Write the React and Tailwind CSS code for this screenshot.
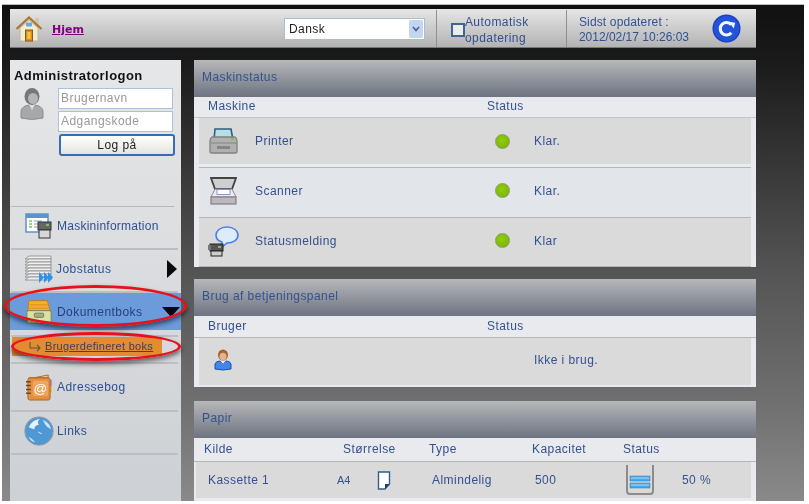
const TXT = 'text-[#33518f]'

function House() {
  return (
    <svg width="28" height="28" viewBox="0 0 28 28">
      <rect x="20" y="3" width="4" height="8" fill="#c9c9b8" />
      <path d="M5 13 L14 5 L23 13 V26 H5Z" fill="#efeed2" stroke="#b9b9a4" />
      <path d="M1.5 14 L14 2.5 L26.5 14" fill="none" stroke="#b0742a" strokeWidth="2.2" />
      <rect x="11" y="7.5" width="6" height="4" rx="1" fill="#6fa6dc" />
      <rect x="10.5" y="15" width="7" height="11" fill="#e08c16" stroke="#8a5a12" />
      <rect x="12.5" y="17" width="3" height="7" fill="#f3c552" />
    </svg>
  )
}

function Person() {
  return (
    <svg width="24" height="34" viewBox="0 0 24 34">
      <ellipse cx="12" cy="9.5" rx="7.5" ry="8.5" fill="#777" />
      <ellipse cx="13" cy="11.5" rx="5" ry="5.5" fill="#b5b5b5" />
      <path d="M1 31 V24 Q2 19 9 18 L12 22 L15 18 Q22 19 23 24 V31 Q12 34 1 31Z" fill="#a8a8a8" stroke="#8f8f8f" />
      <path d="M9 18 L12 23 L15 18Z" fill="#dcdcdc" />
    </svg>
  )
}

function MachineInfo() {
  return (
    <svg width="28" height="28" viewBox="0 0 28 28">
      <rect x="1" y="2" width="22" height="18" fill="#fff" stroke="#5c93c9" strokeWidth="1.5" />
      <rect x="1" y="2" width="22" height="4" fill="#5c93c9" />
      <path d="M4 9h3M4 12h3M4 15h3" stroke="#8abf6a" strokeWidth="1.5" />
      <path d="M9 9h8M9 12h6M9 15h6" stroke="#bbb" strokeWidth="1.5" />
      <rect x="13" y="10" width="13" height="8" fill="#666" stroke="#333" />
      <rect x="14" y="18" width="11" height="8" fill="#d8d8d8" stroke="#333" />
      <rect x="21" y="12" width="3" height="2" fill="#7fc04e" />
    </svg>
  )
}

function JobIcon() {
  return (
    <svg width="30" height="30" viewBox="0 0 30 30">
      {[2, 5, 8, 11, 14, 17, 20, 23].map((y) => (
        <path key={y} d={`M1 ${y + 3} L5 ${y} H27 V${y + 3} H1Z`} fill="#f0f0f0" stroke="#8f8f8f" strokeWidth="0.9" />
      ))}
      <path d="M15 18 L20 23.5 L15 29Z M20 18 L25 23.5 L20 29Z M24 18 L29 23.5 L24 29Z" fill="#2f93ea" />
    </svg>
  )
}

function DocBox() {
  return (
    <svg width="26" height="25" viewBox="0 0 28 30" preserveAspectRatio="none">
      <path d="M3 2 H23 L26 14 H2Z" fill="#f2b02f" stroke="#b67d17" />
      <path d="M4 7 H24 M3 11 H25" stroke="#d1901f" />
      <rect x="1" y="14" width="26" height="15" rx="2" fill="#d6e3a5" stroke="#77805a" />
      <rect x="9" y="17" width="10" height="5" rx="1" fill="#a3ad7f" stroke="#6e7653" />
    </svg>
  )
}

function AddressBook() {
  return (
    <svg width="29" height="27" viewBox="0 0 30 28">
      <rect x="24" y="6" width="4" height="7" fill="#b68fe0" />
      <rect x="24" y="13" width="4" height="6" fill="#e7c34d" />
      <path d="M4 5 L24 1 V4 H4Z" fill="#f1c79a" stroke="#a96b2b" />
      <rect x="3" y="4" width="23" height="23" rx="2" fill="#e58f3d" stroke="#a7642a" />
      <path d="M1 8h5M1 12h5M1 16h5M1 20h5" stroke="#6c4a26" strokeWidth="1.5" />
      <rect x="8" y="7" width="16" height="16" rx="2" fill="#eea560" />
      <text x="16" y="20" textAnchor="middle" fontSize="14" fill="#fff" fontFamily="Liberation Sans, sans-serif">@</text>
    </svg>
  )
}

function Globe() {
  return (
    <svg width="30" height="30" viewBox="0 0 32 32">
      <circle cx="16" cy="16" r="15" fill="#4f98d6" stroke="#8a9aa8" strokeWidth="1.2" />
      <path d="M5 12 Q9 4 17 3 Q13 7 16 9 Q11 10 11 14 Q7 13 5 12Z" fill="#e6f2fb" />
      <path d="M20 4 Q27 7 29 14 Q24 12 22 8Z" fill="#cfe5f6" />
      <path d="M5 22 Q9 24 12 28 Q7 27 5 22Z" fill="#cfe5f6" />
      <path d="M15 17 L19 19" stroke="#d8ecfa" />
    </svg>
  )
}

function Printer() {
  return (
    <svg width="29" height="26" viewBox="0 0 29 26">
      <path d="M6 1 H22 L24 12 H5Z" fill="#b5e0ea" stroke="#2f5f80" strokeWidth="1.6" />
      <path d="M3 9 H26 Q28 10 28 13 V24 Q28 25 26 25 H3 Q1 25 1 24 V13 Q1 10 3 9Z" fill="#b0b0b0" stroke="#808080" strokeWidth="1.3" />
      <path d="M2 15 H27" stroke="#858585" />
      <rect x="8" y="18" width="13" height="3" fill="#858585" />
      <rect x="22" y="10" width="3" height="2" fill="#79c25a" />
    </svg>
  )
}

function Scanner() {
  return (
    <svg width="27" height="28" viewBox="0 0 27 28">
      <path d="M1 1 H26 L22 12 H5Z" fill="#cfcfcf" stroke="#444" strokeWidth="1.8" />
      <path d="M5 12 H22 L26 20 H1Z" fill="#efe8f8" stroke="#8a8a8a" />
      <rect x="7" y="12.5" width="13" height="5" fill="#fff" stroke="#5a6fc0" strokeWidth="0.7" />
      <rect x="1" y="20" width="25" height="7" fill="#bdb7c2" stroke="#808080" strokeWidth="1.2" />
    </svg>
  )
}

function StatusBubble() {
  return (
    <svg width="32" height="32" viewBox="0 0 32 32">
      <path d="M20 2 C27 2 31 6 31 10 C31 15 26 18 20 18 L14 23 L15 17 C11 16 9 13 9 10 C9 6 13 2 20 2Z" fill="#dcecfa" stroke="#4f7dea" strokeWidth="1.6" />
      <rect x="3" y="19" width="13" height="7" fill="#555" stroke="#222" />
      <rect x="4" y="26" width="11" height="5" fill="#ccc" stroke="#222" />
      <rect x="11" y="21" width="3" height="2" fill="#7fc04e" />
      <rect x="1" y="20" width="3" height="5" fill="#777" />
    </svg>
  )
}

function UserIcon() {
  return (
    <svg width="18" height="22" viewBox="0 0 18 22">
      <ellipse cx="9" cy="6" rx="5" ry="5.6" fill="#a8632b" />
      <ellipse cx="9" cy="7.5" rx="3.5" ry="3.8" fill="#e2b48f" />
      <path d="M1 20 V15 Q2 12 6 12 L9 15 L12 12 Q16 12 17 15 V20 Q9 22 1 20Z" fill="#3f87ea" stroke="#1d4fa6" />
      <path d="M6.5 12 L9 15 L11.5 12Z" fill="#dfeaf7" />
    </svg>
  )
}

function PaperIcon() {
  return (
    <svg width="14" height="19" viewBox="0 0 14 19">
      <path d="M1.5 1 H12.5 V13 L8 18 H1.5Z" fill="#fff" stroke="#2f5f94" strokeWidth="1.4" />
      <path d="M8 18 V13 H12.5Z" fill="#1f3f6a" />
    </svg>
  )
}

function TrayIcon() {
  return (
    <svg width="30" height="30" viewBox="0 0 30 30">
      <path d="M2 0 V26 Q2 29 5 29 H25 Q28 29 28 26 V0" fill="none" stroke="#8b8b8b" strokeWidth="2" />
      <rect x="5" y="11" width="20" height="5" fill="#4aa8ec" stroke="#3a78ad" strokeWidth="0.5" />
      <rect x="5" y="18" width="20" height="5" fill="#4aa8ec" stroke="#3a78ad" strokeWidth="0.5" />
      <path d="M6 13h18M6 20h18" stroke="#a9dcf8" strokeWidth="1.2" />
    </svg>
  )
}

function Dot() {
  return <span className="block w-[15px] h-[15px] rounded-full bg-[radial-gradient(circle_at_45%_40%,#8fcf0a,#79ad0c)] border border-[#8a9f62]" />
}

function PanelHead({ title }) {
  return (
    <div className={`h-[37px] shrink-0 pl-2 pt-2 bg-gradient-to-b from-[#b7b8ba] to-[#6e7481] ${TXT} text-[12px]`}>
      {title}
    </div>
  )
}

function StatusRow({ icon, name, status, outer, inner }) {
  return (
    <div className={`mx-[5px] border-b border-[#b5b6b8] ${outer}`}>
      <div className={`flex items-center ${inner}`}>
        <div className="w-[48px] flex justify-center">{icon}</div>
        <div className="ml-[8px] w-[240px]">{name}</div>
        <div className="w-[39px] flex justify-start"><Dot /></div>
        <div>{status}</div>
      </div>
    </div>
  )
}

function NavRow({ icon, label, gap, h, arrow }) {
  return (
    <div className={`flex items-center ${h} ml-[1px] mr-[3px] border-b-2 border-[#bcbec1] pl-[13px] text-[#2f4f92] text-[12px]`}>
      <div className="w-[30px] flex justify-center shrink-0">{icon}</div>
      <span className={gap}>{label}</span>
      {arrow}
    </div>
  )
}

export default function App() {
  return (
    <div className="w-[809px] h-[504px] bg-white overflow-hidden font-['Liberation_Sans',sans-serif] tracking-[0.45px] blur-[0.35px]">
      <div className="relative w-[802px] h-[497px] ml-[2px] mt-[4px] border-t border-[#bbb] bg-[linear-gradient(to_bottom,#111_0,#1a1a1a_55px,#555_270px,#707070_400px,#8a8a8a_497px)] px-[8px] pt-[4px]">
        {/* top bar */}
        <div className="w-[746px] h-[39px] flex items-center bg-gradient-to-b from-[#e6e6e6] to-[#b3b3b3] border-b border-[#777] text-[12px] pt-[1px]">
          <div className="ml-[5px] w-[31px]"><House /></div>
          <a className="ml-[6px] mt-[3px] font-['DejaVu_Sans',sans-serif] tracking-normal font-bold text-[11px] text-[#800080] underline">Hjem</a>
          <div className="ml-[200px] w-[141px] h-[22px] bg-white border border-[#a9bdd4] flex items-center justify-between pl-1 pr-[1px] text-[#222]">
            Dansk
            <span className="w-[14px] h-[18px] bg-[#c4d5f2] rounded-[2px] flex items-center justify-center">
              <svg width="8" height="6" viewBox="0 0 8 6"><path d="M1 1 L4 4.5 L7 1" fill="none" stroke="#3f5f96" strokeWidth="1.6" /></svg>
            </span>
          </div>
          <div className="ml-[11px] h-full w-[131px] border-l border-r border-[#8f9093] flex items-center pl-[14px]">
            <span className="w-[14px] h-[14px] shrink-0 mt-[2px] border-2 border-[#3f6596] bg-[#ececec]" />
            <div className={`${TXT} leading-[16px] pt-[2px]`}>Automatisk<br />opdatering</div>
          </div>
          <div className={`pl-[12px] w-[145px] ${TXT} leading-[15px] pt-[2px] tracking-[0.15px]`}>
            Sidst opdateret :<br /><span className="tracking-normal">2012/02/17 10:26:03</span>
          </div>
          <svg width="29" height="29" viewBox="0 0 30 30">
            <circle cx="15" cy="15" r="14.5" fill="#1d3fc4" />
            <circle cx="15" cy="15" r="13" fill="#2353d8" />
            <path d="M20 11 A6.5 6.5 0 1 0 20 19.5" fill="none" stroke="#f2f6ff" strokeWidth="3.2" />
            <path d="M17.5 8 L24 9 L22.5 15Z" fill="#f2f6ff" />
          </svg>
        </div>

        <div className="flex mt-[12px] gap-[13px]">
          {/* sidebar */}
          <aside className="w-[171px] h-[441px] shrink-0 bg-gradient-to-b from-[#e6e7e8] to-[#cdd0d4] pt-[8px]">
            <h2 className="pl-[4px] font-bold text-[13px] text-[#111] leading-[16px]">Administratorlogon</h2>
            <div className="flex mt-[4px] h-[111px]">
              <div className="w-[48px] pl-[10px] -mt-[1px]"><Person /></div>
              <div className="flex flex-col text-[12px] text-[#999]">
                <div className="w-[115px] h-[21px] bg-white border border-[#adc1d8] pl-[2px] leading-[19px]">Brugernavn</div>
                <div className="w-[115px] h-[21px] mt-[2px] bg-white border border-[#adc1d8] pl-[2px] leading-[19px]">Adgangskode</div>
                <button className="w-[116px] h-[22px] mt-[2px] ml-[1px] bg-gradient-to-b from-white to-[#e4e4df] border-2 border-[#3a6cb4] rounded-[3px] text-[#222] text-[12px] leading-[16px]">Log på</button>
              </div>
            </div>
            <div className="ml-[1px] mr-[7px] border-b border-[#b8b9bb] h-[8px]" />
            <NavRow h="h-[43px] pb-[4px] tracking-[0.25px]" icon={<MachineInfo />} label="Maskininformation" gap="ml-[3px]" />
            <NavRow h="h-[43px] pb-[4px]" icon={<JobIcon />} label="Jobstatus" gap="ml-[2px]" arrow={
              <svg className="ml-auto mr-[1px]" width="10" height="18" viewBox="0 0 10 18"><path d="M0 0 L10 9 L0 18Z" fill="#0a0a0a" /></svg>
            } />
            <div className="h-[37px] bg-[#6c9bdc] flex items-center pl-[14px] text-[#24407f] text-[12px]">
              <div className="w-[30px] flex justify-center shrink-0"><DocBox /></div>
              <span className="ml-[3px]">Dokumentboks</span>
              <svg className="ml-auto mr-[1px]" width="18" height="10" viewBox="0 0 18 10"><path d="M0 0 L18 0 L9 10Z" fill="#0a0a0a" /></svg>
            </div>
            <div className="h-[29px] ml-[1px] mr-[3px] border-t-2 border-b-2 border-[#bcbec1] mt-[5px]">
              <div className="h-[19px] w-[150px] ml-[1px] bg-[#e28b32] flex items-center pl-[17px] text-[#3a3f63] text-[11px] tracking-[0.3px]">
                <svg className="mr-[3px] shrink-0" width="13" height="10" viewBox="0 0 13 10"><path d="M1 0 V6 H11 M8 3 L11 6 L8 9" fill="none" stroke="#6b5238" strokeWidth="1.1" /></svg>
                <span className="underline whitespace-nowrap">Brugerdefineret boks</span>
              </div>
            </div>
            <NavRow h="h-[48px]" icon={<AddressBook />} label="Adressebog" gap="ml-[3px]" />
            <NavRow h="h-[43px] pb-[4px]" icon={<Globe />} label="Links" gap="ml-[3px]" />
          </aside>

          {/* main panels */}
          <main className={`w-[562px] flex flex-col ${TXT} text-[12px]`}>
            <section className="h-[207px] bg-[#e9eaed] flex flex-col">
              <PanelHead title="Maskinstatus" />
              <div className="h-[21px] flex items-center pl-[14px] pb-[2px] border-b border-[#c4c5c7]">
                <span className="w-[279px]">Maskine</span><span>Status</span>
              </div>
              <StatusRow outer="h-[50px]" inner="h-[46px] bg-[#dadada]" icon={<Printer />} name="Printer" status="Klar." />
              <StatusRow outer="h-[50px] bg-[#e2e5ea]" inner="h-[45px]" icon={<Scanner />} name="Scanner" status="Klar." />
              <StatusRow outer="h-[49px] bg-[#dadada]" inner="h-[45px]" icon={<StatusBubble />} name="Statusmelding" status="Klar" />
            </section>

            <section className="h-[108px] mt-[12px] bg-[#e9eaed] flex flex-col">
              <PanelHead title="Brug af betjeningspanel" />
              <div className="h-[22px] flex items-center pl-[14px] pb-[2px] border-b border-[#b5b6b8]">
                <span className="w-[279px]">Bruger</span><span>Status</span>
              </div>
              <div className="h-[47px] mx-[5px] pb-[4px] bg-[#dadada] flex items-center">
                <div className="w-[335px] pl-[15px]"><UserIcon /></div>
                <span>Ikke i brug.</span>
              </div>
            </section>

            <section className="h-[100px] mt-[14px] bg-[#e9eaed] flex flex-col">
              <PanelHead title="Papir" />
              <div className="h-[24px] flex items-center pl-[10px] pb-[2px] border-b border-[#b5b6b8]">
                <span className="w-[139px]">Kilde</span>
                <span className="w-[86px]">Størrelse</span>
                <span className="w-[103px]">Type</span>
                <span className="w-[91px]">Kapacitet</span>
                <span>Status</span>
              </div>
              <div className="h-[36px] ml-[2px] mr-[5px] bg-[#dadada] flex items-center pl-[12px]">
                <span className="w-[129px]">Kassette 1</span>
                <span className="w-[40px] text-[11px] tracking-normal">A4</span>
                <div className="w-[55px]"><PaperIcon /></div>
                <span className="w-[103px]">Almindelig</span>
                <span className="w-[90px]">500</span>
                <div className="w-[57px]"><TrayIcon /></div>
                <span>50 %</span>
              </div>
            </section>
          </main>
        </div>

        {/* red annotation ellipses */}
        <div className="absolute left-[2px] top-[280px] w-[183px] h-[42px] rounded-[50%] border-[3px] border-[#e8101a] shadow-[0_3px_5px_rgba(0,0,0,0.55)]" />
        <div className="absolute left-[9px] top-[327px] w-[170px] h-[29px] rounded-[50%] border-[3px] border-[#e8101a] shadow-[0_3px_5px_rgba(0,0,0,0.55)]" />
      </div>
    </div>
  )
}
